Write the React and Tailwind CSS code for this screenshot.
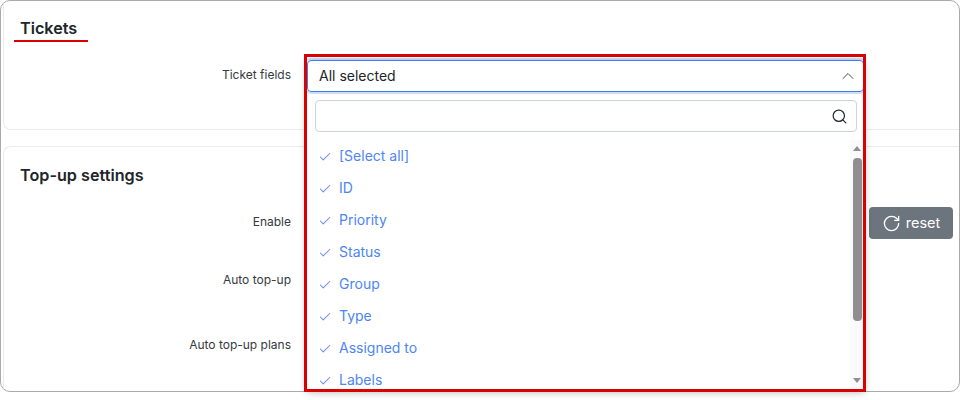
import React from "react";
import { Check, ChevronUp, RotateCw, Search } from "lucide-react";

const fields = ["[Select all]", "ID", "Priority", "Status", "Group", "Type", "Assigned to", "Labels"];

const Row = ({ label, className, children }) => (
  <div className={`flex items-center ${className}`}>
    <label className="w-[287px] shrink-0 pb-[2px] text-right text-xs text-[#343a40]">{label}</label>
    {children}
  </div>
);

const App = () => {
  return (
    <div className="relative h-[400px] w-[960px] overflow-hidden bg-white font-['Inter',sans-serif]">
      <div className="h-[392px] overflow-hidden rounded-[10px] border border-[#aaaaaa] bg-white pl-[2px]">
        {/* Tickets card */}
        <div className="relative -mt-px h-[130px] rounded-bl-[8px] border-b border-l border-[#e9ecef] pl-[16px] pt-[18px]">
          <h2 className="text-[16.2px] leading-[20px] font-semibold text-[#212529]">Tickets</h2>
          <div className="absolute top-[40px] left-[10px] h-[2px] w-[74px] bg-[#d90000]" />
          <Row label="Ticket fields" className="-ml-[16px] mt-[18px] h-[40px]" />
        </div>

        {/* Top-up settings card */}
        <div className="mt-[16px] h-[260px] rounded-tl-[8px] border-t border-l border-[#e9ecef] pl-[16px] pt-[18px]">
          <h2 className="text-[16.2px] leading-[20px] font-semibold text-[#212529]">Top-up settings</h2>
          <Row label="Enable" className="-ml-[16px] mt-[22px] h-[32px] justify-between pr-[6px]">
            <button className="flex h-[32px] w-[84px] items-center justify-center gap-[5px] rounded-[4px] bg-[#6c757d] text-[14.5px] text-white">
              <RotateCw size={19} strokeWidth={1.7} />
              reset
            </button>
          </Row>
          <Row label="Auto top-up" className="-ml-[16px] mt-[26px] h-[32px]" />
          <Row label="Auto top-up plans" className="-ml-[16px] mt-[33px] h-[32px]" />
        </div>
      </div>

      {/* Open dropdown */}
      <div className="absolute top-[60px] left-[307px] flex h-[330px] w-[557px] flex-col bg-white shadow-[0_2px_8px_rgba(0,0,0,0.3)]">
        <div className="flex h-[32px] shrink-0 items-center justify-between rounded-[4px] border border-[#3b7ded] pr-[5px] pl-[11px] text-sm text-[#212529] shadow-[0_0_0_2px_rgba(59,125,237,0.25)]">
          All selected
          <ChevronUp size={20} strokeWidth={1.2} className="text-[#495057]" />
        </div>
        <div className="mt-[8px] mr-[7px] ml-[8px] flex h-[32px] shrink-0 items-center justify-end rounded-[4px] border border-[#ced4da] pr-[8px]">
          <Search size={17} strokeWidth={1.7} className="text-[#212529]" />
        </div>
        <div className="relative mt-[8px] min-h-0 flex-1 overflow-hidden">
          <ul className="pl-[11px]">
            {fields.map((f) => (
              <li key={f} className="flex h-[32px] items-center gap-[7px] text-sm text-[#4d85f5]">
                <Check size={14} strokeWidth={1.8} className="mt-[2px] text-[#6a8fe0]" />
                {f}
              </li>
            ))}
          </ul>
          <div className="absolute top-0 right-[1px] bottom-0 flex w-[13px] flex-col items-center bg-[#fafafa] pt-[6px] pl-[1px]">
            <div className="h-0 w-0 border-x-[4px] border-b-[5px] border-x-transparent border-b-[#8f8f8f]" />
            <div className="mt-[7px] h-[163px] w-[9px] rounded-[4px] bg-[#8f8f8f]" />
            <div className="mt-[57px] h-0 w-0 border-x-[4px] border-t-[5px] border-x-transparent border-t-[#8f8f8f]" />
          </div>
        </div>
      </div>

      {/* Red highlight box */}
      <div className="absolute top-[54px] left-[304px] h-[338px] w-[562px] border-[3px] border-[#d90000]" />
    </div>
  );
};

export default App;
